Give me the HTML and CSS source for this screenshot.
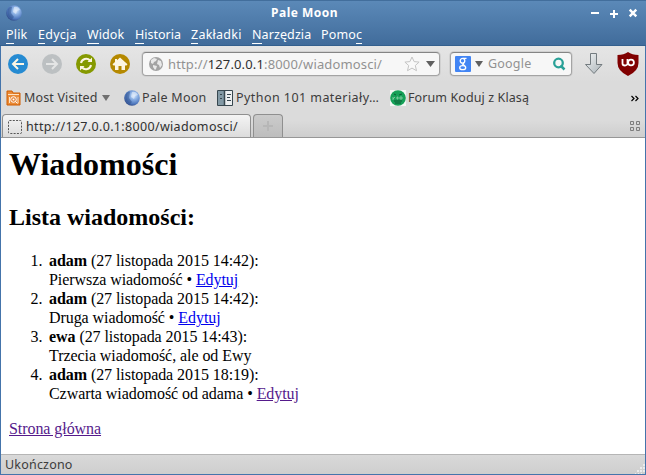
FILE: index.html
```html
<!DOCTYPE html>
<html lang="pl">
<head>
<meta charset="utf-8">
<title>Pale Moon</title>
<link rel="stylesheet" href="styles.css">
</head>
<body>
<svg class="defs" width="0" height="0">
  <defs>
    <radialGradient id="moon" cx=".62" cy=".35" r=".7"><stop offset="0" stop-color="#d9e8fb"/><stop offset=".35" stop-color="#8bb0e4"/><stop offset=".75" stop-color="#4f78bd"/><stop offset="1" stop-color="#2c4682"/></radialGradient>
    <linearGradient id="metal" x1="0" x2="1" y2="1"><stop offset="0" stop-color="#f4f6f7"/><stop offset="1" stop-color="#a9b2b7"/></linearGradient>
    <symbol id="moon-icon" viewBox="0 0 16 16"><circle cx="8" cy="8" r="7.8" fill="url(#moon)"/><path d="M8 2q4-1 6 3l-3 1-1 3-3-2z" fill="#e5effc" opacity=".6"/><path d="M2 4q2-3 4-2L5 8l3 4-2 2Q0 11 2 4z" fill="#264580" opacity=".4"/></symbol>
  </defs>
</svg>
<div class="window">
  <header class="frame">
    <div class="titlebar">
      <svg class="app-icon" width="16" height="16"><use href="#moon-icon"/></svg>
      <span class="title">Pale Moon</span>
      <svg class="controls" width="48" height="12" viewBox="0 0 48 12" fill="none" stroke="#fff" stroke-width="2"><path d="M0 6h8M19 7h8M23 3v8"/><path d="M38.700 2.700l6.600 6.600M45.300 2.700l-6.600 6.600" stroke-width="2.400"/></svg>
    </div>
    <nav class="menu">
      <span class="m-plik"><u>P</u>lik</span><span class="m-edycja"><u>E</u>dycja</span><span class="m-widok"><u>W</u>idok</span><span class="m-historia"><u>H</u>istoria</span><span class="m-zakladki"><u>Z</u>akładki</span><span class="m-narzedzia"><u>N</u>arzędzia</span><span class="m-pomoc">Pomo<u>c</u></span>
    </nav>
  </header>
  <div class="chrome">
    <div class="toolbar">
      <div class="buttons">
        <svg width="20" height="20" viewBox="0 0 20 20"><circle cx="10" cy="10" r="10" fill="#268bd2"/><path d="M16 10H5M10 5l-5 5 5 5" fill="none" stroke="#fdf6e3" stroke-width="2"/></svg>
        <svg width="20" height="20" viewBox="0 0 20 20"><circle cx="10" cy="10" r="10" fill="#bcc0c2"/><path d="M4 10h11M10 5l5 5-5 5" fill="none" stroke="#e4e5e5" stroke-width="2"/></svg>
        <svg width="20" height="20" viewBox="0 0 20 20"><circle cx="10" cy="10" r="10" fill="#859900"/><path d="M5 9a5.200 5.200 0 0 1 9-2.500M15 11a5.200 5.200 0 0 1-9 2.500" fill="none" stroke="#fdf6e3" stroke-width="2"/><path d="M11.500 8H16V3.500zM8.500 12H4v4.500z" fill="#fdf6e3"/></svg>
        <svg width="20" height="20" viewBox="0 0 20 20"><circle cx="10" cy="10" r="10" fill="#b58900"/><path d="M10 3.500l7.500 6.800-1 1.200H15V16h-3.500v-4h-3v4H5v-4.500H3.500l-1-1.200L5 8V5h2v1.200z" fill="#fdf6e3"/></svg>
      </div>
      <div class="field address">
        <svg width="14" height="14" viewBox="0 0 14 14"><circle cx="7" cy="7" r="7" fill="#a3a3a3"/><path d="M2 3l3-2 3 1-1 2-2 1-1 2-2-1zM9 3l3 1 1 4-2 3-1-3-2-1zM4 8l4 1-1 3-1 1-2-3z" fill="#e9e9e9"/></svg>
        <span class="url">http://<b>127.0.0.1</b>:8000/wiadomosci/</span>
        <svg class="star" width="16" height="16" viewBox="0 0 16 16"><path d="M8 1l2.100 4.600 5 .5-3.800 3.400 1.200 5.200L8 12.100l-4.500 2.600 1.200-5.200L.9 6.100l5-.5z" fill="#f9f9f9" stroke="#c4c4c4"/></svg>
        <i class="caret"></i>
      </div>
      <div class="field search">
        <svg width="16" height="16" viewBox="0 0 16 16"><rect width="16" height="16" rx="1" fill="#4285f4"/><g fill="none" stroke="#fff" stroke-width="1.300"><ellipse cx="7.500" cy="4.800" rx="2.300" ry="2.400"/><path d="M8 2.400h3.500M9 7l-1.300 1.200L10 10"/><ellipse cx="7.700" cy="11.700" rx="3" ry="2"/></g></svg>
        <i class="caret"></i>
        <span class="placeholder">Google</span>
        <svg width="13" height="14" viewBox="0 0 13 14" fill="none" stroke="#2aa198"><circle cx="5.500" cy="6" r="4.300" stroke-width="2.300"/><path d="M7.500 8.500l4 4" stroke-width="2.500"/></svg>
      </div>
      <svg class="download" width="20" height="24" viewBox="0 0 20 24"><path d="M6.500 1.500h6v11h5.500L10 21.500 1.500 12.500h5z" fill="url(#metal)" stroke="#737b7f"/></svg>
      <svg class="shield" width="22" height="24" viewBox="0 0 22 24"><path d="M11 0q4 3 10.500 3v8q0 8-10.500 13Q.5 19 .5 11V3Q7 3 11 0z" fill="#800000"/><path d="M5.500 7v4.500a2.500 2 0 0 0 5 0V7" fill="none" stroke="#fff" stroke-width="1.800"/><circle cx="14" cy="10.500" r="2.900" fill="none" stroke="#fff" stroke-width="1.800"/></svg>
    </div>
    <div class="bookmarks">
      <svg width="15" height="16" viewBox="0 0 15 16"><path d="M1 1h5l1 2h7v12H1z" fill="#ea8a36" stroke="#ce5c00"/><path d="M2 4.500h11M3.500 7v6M12 7v6" stroke="#fde3c4"/><circle cx="7.500" cy="9.500" r="2.800" fill="#e8873a" stroke="#fff"/><circle cx="7.500" cy="9.500" r="1" fill="#fff"/><path d="M9.500 11.500l2 2" stroke="#fff"/></svg>
      <span class="b-most">Most Visited</span><i class="caret small"></i>
      <svg class="b-moon" width="16" height="16"><use href="#moon-icon"/></svg><span class="b-pale">Pale Moon</span>
      <svg width="16" height="16" viewBox="0 0 16 16"><path d="M.5.5h15v15H.5z" fill="#eceff1" stroke="#37474f"/><path d="M1 1h6v14H1z" fill="#8299a5"/><path d="M7.500 0v16" stroke="#37474f" stroke-width="1.500"/><path d="M3 4.500h2M3 8.500h2M10 4.500h4M10 7.500h3M10 10.500h4" stroke="#37474f"/></svg><span class="b-python">Python 101 materiały…</span>
      <svg width="16" height="16" viewBox="0 0 16 16"><path d="M0 0h16v16H0z" fill="#f3f7f4"/><circle cx="8" cy="8" r="7.800" fill="#16a058"/><path d="M4 4l2 1M9 5l3-1M4 11h8M5 13h6" stroke="#0b5b35"/><path d="M3 7v3M3 9l2-2M7 7h1v2H7zM10 7h2v2h-2z" fill="none" stroke="#8fd0ab" stroke-width=".8"/></svg><span class="b-forum">Forum Koduj z Klasą</span>
      <svg class="more" width="8" height="7" viewBox="0 0 8 7" fill="none" stroke="#000" stroke-width="1.200"><path d="M.5 1l2.500 2.500L.5 6M4.500 1L7 3.500 4.500 6"/></svg>
    </div>
    <div class="tabs">
      <div class="tab"><svg width="14" height="14" viewBox="0 0 14 14"><rect x=".5" y=".5" width="13" height="13" rx="1" fill="none" stroke="#555" stroke-dasharray="2 1.300"/></svg><span>http://127.0.0.1:8000/wiadomosci/</span></div>
      <div class="newtab"><svg width="10" height="10" viewBox="0 0 10 10"><path d="M0 5h10M5 0v10" stroke="#b7b7b7" stroke-width="2"/></svg></div>
      <svg class="groups" width="11" height="11" viewBox="0 0 11 11" fill="none" stroke="#7d7d7d"><path d="M.5.5h3v3h-3zM6.500.5h3v3h-3zM.5 6.500h3v3h-3zM6.500 6.500h3v3h-3z"/></svg>
    </div>
  </div>
  <main>
    <h1>Wiadomości</h1>
    <h2>Lista wiadomości:</h2>
    <ol>
      <li><b>adam</b> (27 listopada 2015 14:42):<br>Pierwsza wiadomość • <a>Edytuj</a></li>
      <li><b>adam</b> (27 listopada 2015 14:42):<br>Druga wiadomość • <a>Edytuj</a></li>
      <li><b>ewa</b> (27 listopada 2015 14:43):<br>Trzecia wiadomość, ale od Ewy</li>
      <li><b>adam</b> (27 listopada 2015 18:19):<br>Czwarta wiadomość od adama • <a class="visited">Edytuj</a></li>
    </ol>
    <a class="visited">Strona główna</a>
  </main>
  <footer><span>Ukończono</span><svg width="10" height="10" viewBox="0 0 10 10" fill="#ececec"><path d="M8 0h2v2H8zM5 3h2v2H5zM8 3h2v2H8zM2 6h2v2H2zM5 6h2v2H5zM8 6h2v2H8zM0 9h1v1H0zM3 9h1v1H3zM6 9h1v1H6z"/></svg></footer>
</div>
</body>
</html>
```
FILE: styles.css
```css
* { box-sizing: border-box; }
body { margin: 0; overflow: hidden; font: 12.5px/18px "Noto Sans", sans-serif; color: #3c3c3c; }
svg { display: block; flex: none; }
.defs { position: absolute; }
.window { width: 646px; height: 475px; display: flex; flex-direction: column; border: solid #4474ab; border-width: 0 1px 1px; background: #fff; }
.frame { height: 46px; margin: 0 -1px; flex: none; color: #fff; background: linear-gradient(#5b89b8, #416c9b); border-top: 1px solid #426e9c; border-bottom: 1px solid #34608e; }
.titlebar { height: 23px; display: flex; align-items: center; padding-left: 6px; }
.title { margin-left: 249px; width: 66px; font-weight: 700; font-size: 12px; letter-spacing: .5px; white-space: nowrap; }
.controls { margin-left: 254px; }
.menu { display: flex; gap: 10px; padding: 2px 0 0 6px; white-space: nowrap; }
.menu u { text-decoration: none; box-shadow: 0 1px #fff; display: inline-block; height: 17px; }
.m-plik { width: 22px; letter-spacing: .2px; }
.m-edycja { width: 39px; letter-spacing: .25px; }
.m-widok { width: 38px; letter-spacing: .1px; }
.m-historia { width: 46px; }
.m-zakladki { width: 51px; letter-spacing: .25px; }
.m-narzedzia { width: 59px; letter-spacing: .1px; }
.m-pomoc { width: 42px; letter-spacing: .15px; }
.chrome { height: 92px; flex: none; background: linear-gradient(#e5e5e5, #dbdbdb 40%, #dbdbdb 82%, #cecece); border-bottom: 1px solid #979797; }
.toolbar { height: 36px; display: flex; align-items: center; padding-left: 7px; }
.buttons { display: flex; gap: 14px; width: 134px; }
.field { height: 24px; display: flex; align-items: center; background: #f7f7f7; border: 1px solid #a4a4a4; border-top-color: #858585; border-radius: 4px; box-shadow: 0 0 0 1px #d1d1d1; }
.address { width: 298px; padding-left: 6px; }
.url { width: 236px; margin-left: 5px; color: #929292; font-size: 13px; letter-spacing: .15px; white-space: nowrap; }
.url b { font-weight: 400; color: #303030; }
.caret { width: 9px; height: 6px; background: #606060; clip-path: polygon(0 0, 100% 0, 50% 100%); flex: none; }
.star { margin-right: 6px; }
.search { width: 122px; margin-left: 10px; padding-left: 4px; }
.search .caret { margin-left: 4px; width: 8px; }
.placeholder { width: 56px; margin: 0 9px 0 5px; color: #929292; letter-spacing: .2px; }
.download { margin-left: 12px; }
.shield { margin-left: 13px; }
.bookmarks { height: 31px; display: flex; align-items: center; padding: 1px 0 0 5px; white-space: nowrap; }
.b-most { margin-left: 3px; width: 78px; letter-spacing: .15px; }
.small { width: 8px; height: 6px; background: #707070; }
.b-moon { margin-left: 14px; }
.b-pale { margin-left: 2px; width: 75px; letter-spacing: .25px; }
.b-python { margin-left: 3px; width: 154px; letter-spacing: .44px; }
.b-forum { margin-left: 2px; width: 223px; letter-spacing: .1px; }
.tabs { height: 24px; display: flex; align-items: stretch; }
.tab { width: 249px; margin-left: 1px; display: flex; align-items: center; gap: 4px; padding: 1px 0 0 5px; color: #303030; border: 1px solid #8f8f8f; border-bottom: 0; border-radius: 4px 4px 0 0; background: linear-gradient(#f4f4f4, #dcdcdc); letter-spacing: .33px; white-space: nowrap; }
.newtab { width: 30px; margin-left: 2px; display: grid; place-items: center; border: 1px solid #8f8f8f; border-bottom: 0; border-radius: 4px 4px 0 0; background: linear-gradient(#cbcbcb, #bdbdbd); }
.tab, .newtab { margin-top: 1px; }
.groups { margin: 8px 0 0 347px; }
main { flex: 1; padding: 0 8px; color: #000; font: 16px/19px "Liberation Serif", serif; letter-spacing: -.065px; }
h1 { margin: 8px 0 0; font-size: 32px; line-height: 37px; }
h2 { margin: 21px 0 20px; font-size: 24px; line-height: 27px; }
h1, h2 { letter-spacing: 0; }
ol { margin: 0 0 16px; padding-left: 40px; }
li::marker { content: counter(list-item) ".\2005\2006"; }
a { color: #0000ee; text-decoration: underline; }
.visited { color: #551a8b; }
footer { height: 20px; flex: none; display: flex; justify-content: space-between; align-items: flex-end; padding-left: 4px; border-top: 1px solid #b5b5b5; background: linear-gradient(#d9d9d9, #cecece); letter-spacing: .2px; }
```
